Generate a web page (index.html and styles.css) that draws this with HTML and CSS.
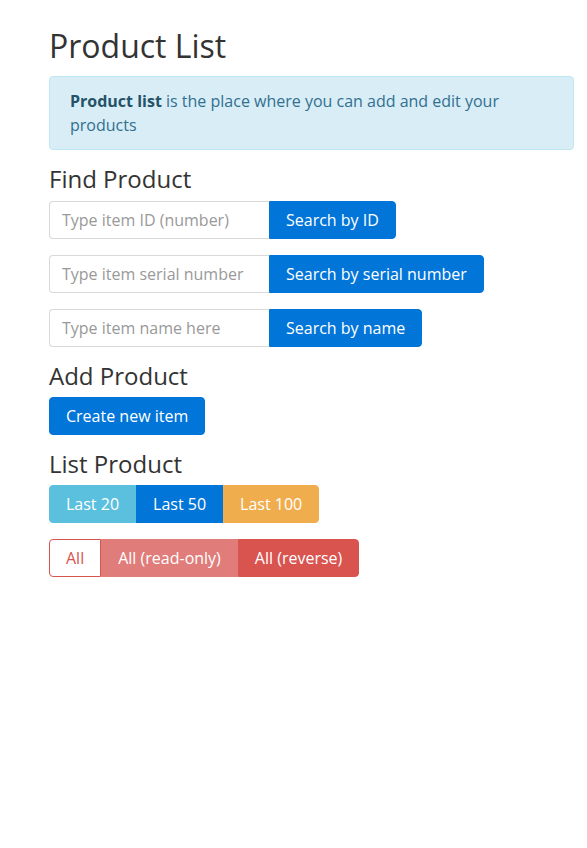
FILE: index.html
```html
<!DOCTYPE html>
<html lang="en">
<head>
<meta charset="utf-8">
<title>Product List</title>
<link rel="stylesheet" href="styles.css">
</head>
<body>
<div class="container">
  <h1 class="title">Product List</h1>
  <div class="alert"><strong>Product list</strong> is the place where you can add and edit your products</div>

  <h3 class="section">Find Product</h3>
  <div class="input-group">
    <input class="form-control" type="text" placeholder="Type item ID (number)">
    <button class="btn btn-primary btn-append">Search by ID</button>
  </div>
  <div class="input-group">
    <input class="form-control" type="text" placeholder="Type item serial number">
    <button class="btn btn-primary btn-append">Search by serial number</button>
  </div>
  <div class="input-group">
    <input class="form-control" type="text" placeholder="Type item name here">
    <button class="btn btn-primary btn-append">Search by name</button>
  </div>

  <h3 class="section">Add Product</h3>
  <div class="row-block">
    <button class="btn btn-primary">Create new item</button>
  </div>

  <h3 class="section">List Product</h3>
  <div class="btn-group">
    <button class="btn btn-info">Last 20</button>
    <button class="btn btn-primary">Last 50</button>
    <button class="btn btn-warning">Last 100</button>
  </div>
  <div class="btn-group">
    <button class="btn btn-outline-danger">All</button>
    <button class="btn btn-danger-light">All (read-only)</button>
    <button class="btn btn-danger">All (reverse)</button>
  </div>
</div>
</body>
</html>
```

FILE: styles.css
```css
* { box-sizing: border-box; }

html, body {
  margin: 0;
  padding: 0;
  background: #fff;
}

body {
  font-family: "Open Sans", "Liberation Sans", sans-serif;
  font-size: 16px;
  line-height: 24px;
  color: #292b2c;
}

.container {
  width: 525px;
  margin-left: 49px;
  padding-top: 28px;
}

.title {
  font-size: 32px;
  font-weight: 400;
  line-height: 1.1;
  margin: 0 0 13px;
  color: #333;
}

.alert {
  background: #d9edf7;
  border: 1px solid #bce8f1;
  color: #31708f;
  border-radius: 4px;
  padding: 12px 20px;
  margin-bottom: 16px;
}

.alert strong { font-weight: 700; color: #245269; }

.section {
  font-size: 24px;
  font-weight: 400;
  line-height: 1.1;
  margin: 0 0 8px;
  color: #333;
}

.input-group {
  display: flex;
  margin-bottom: 16px;
}

.form-control {
  width: 220px;
  height: 38px;
  padding: 6px 12px;
  font-family: inherit;
  font-size: 16px;
  line-height: 24px;
  color: #464a4c;
  border: 1px solid rgba(0,0,0,.15);
  border-right: 0;
  border-radius: 4px 0 0 4px;
  outline: none;
}

.form-control::placeholder { color: #999; opacity: 1; }

.btn {
  font-family: inherit;
  font-size: 16px;
  line-height: 24px;
  padding: 6px 16px;
  border: 1px solid transparent;
  border-radius: 4px;
  color: #fff;
  cursor: pointer;
  height: 38px;
}

.btn-append { border-radius: 0 4px 4px 0; }

.btn-primary { background: #0275d8; border-color: #0275d8; }
.btn-info { background: #5bc0de; border-color: #5bc0de; }
.btn-warning { background: #f0ad4e; border-color: #f0ad4e; }
.btn-danger { background: #d9534f; border-color: #d9534f; }
.btn-danger-light { background: #e07c79; border-color: #e07c79; }
.btn-outline-danger { background: #fff; border-color: #d9534f; color: #d9534f; }

.row-block { margin-bottom: 16px; }

.btn-group {
  display: flex;
  margin-bottom: 16px;
}

.btn-group .btn { border-radius: 0; }
.btn-group .btn:first-child { border-radius: 4px 0 0 4px; }
.btn-group .btn:last-child { border-radius: 0 4px 4px 0; }
```
